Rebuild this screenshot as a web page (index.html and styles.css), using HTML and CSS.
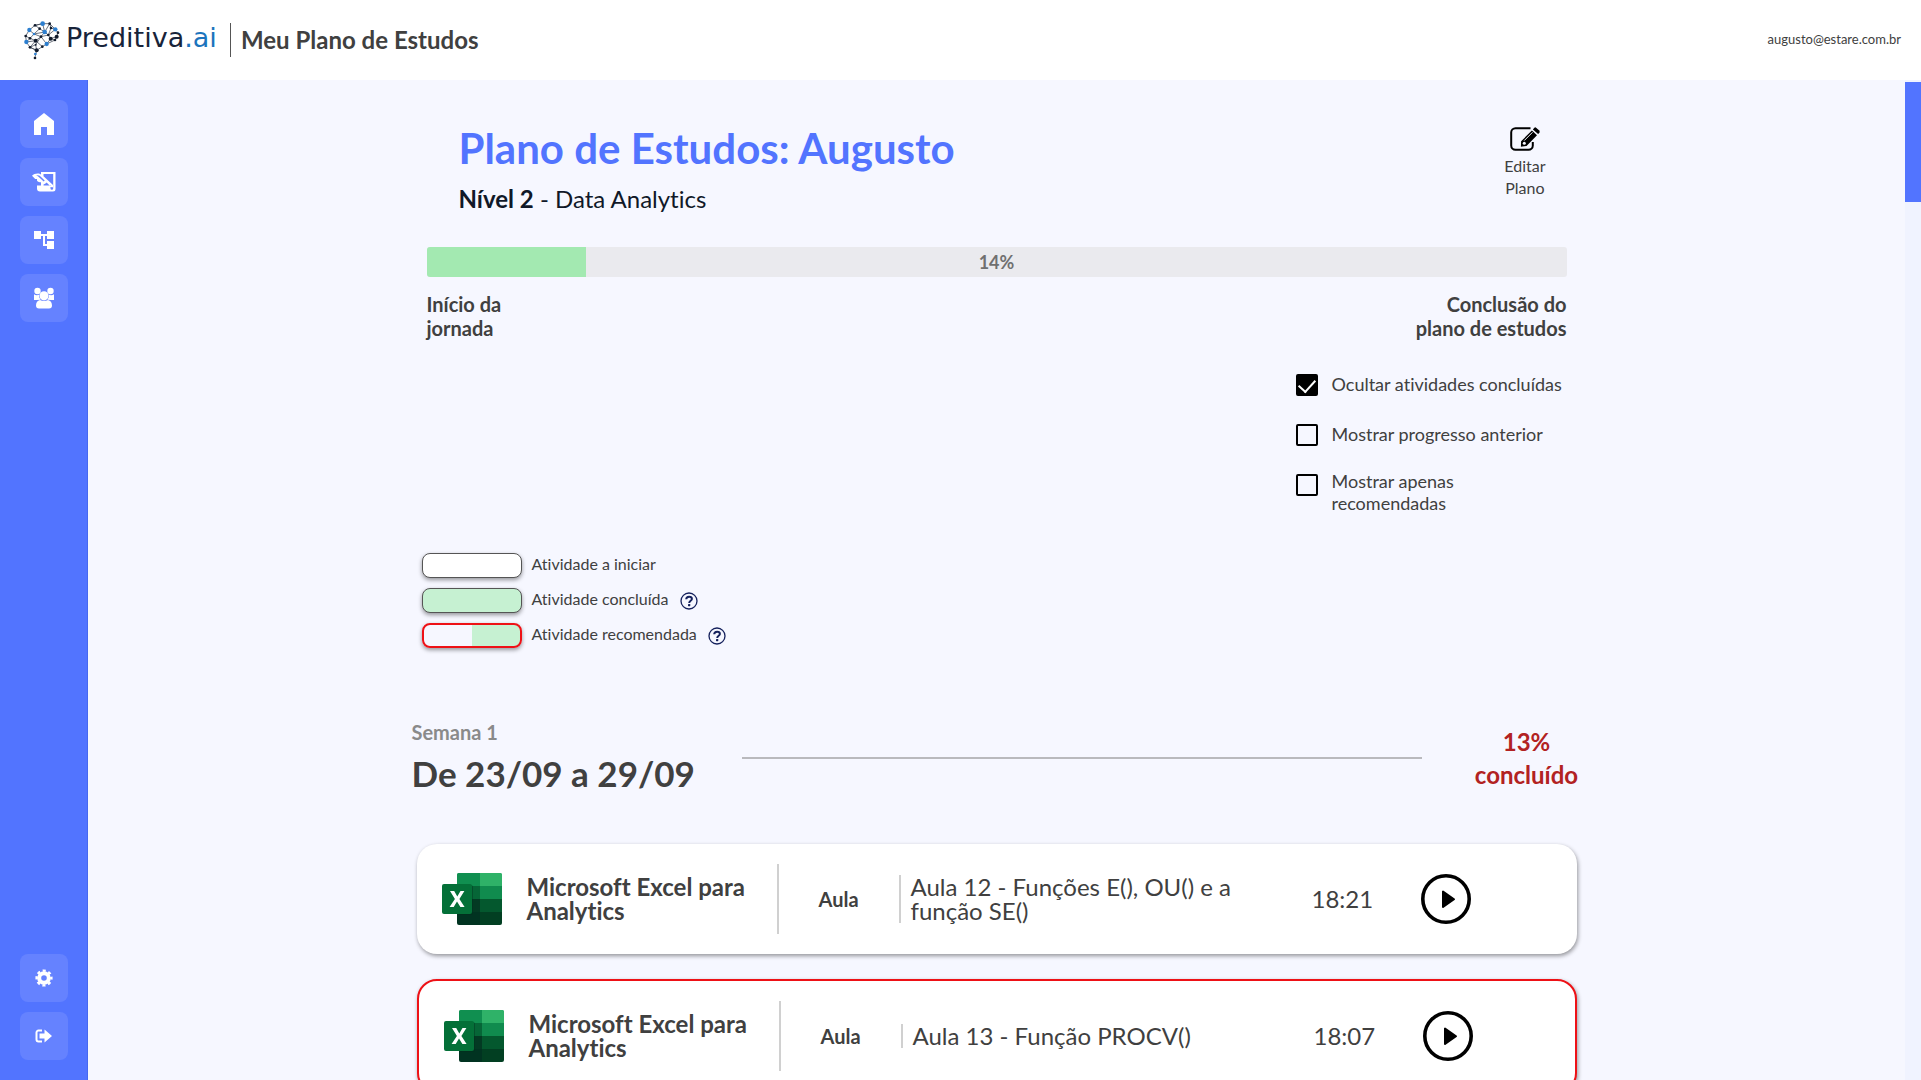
FILE: index.html
```html
<!DOCTYPE html>
<html lang="pt-BR">
<head>
<meta charset="utf-8">
<meta name="viewport" content="width=device-width, initial-scale=1">
<title>Meu Plano de Estudos - Preditiva.ai</title>
<link rel="stylesheet" href="styles.css">
</head>
<body>
<svg class="sprite" aria-hidden="true">
  <symbol id="excel" viewBox="0 0 60 53">
    <path fill="#21a366" d="M17 0h41a2 2 0 0 1 2 2v12H15V2a2 2 0 0 1 2-2z"/>
    <path fill="#108f50" d="M17 0h21v13H15V2a2 2 0 0 1 2-2z"/>
    <path fill="#2fb268" d="M38 0h20a2 2 0 0 1 2 2v11H38z"/>
    <path fill="#066637" d="M15 13h23v13H15z"/>
    <path fill="#108b4e" d="M38 13h22v13H38z"/>
    <path fill="#033a23" d="M15 26h23v13H15z"/>
    <path fill="#04582e" d="M38 26h22v13H38z"/>
    <path fill="#013321" d="M15 39h23v13H17a2 2 0 0 1-2-2z"/>
    <path fill="#023f22" d="M38 39h22v11a2 2 0 0 1-2 2H38z"/>
    <path fill="#022d1c" opacity=".4" d="M15 12h14a2 2 0 0 1 2 2v26a2 2 0 0 1-2 2H15z"/>
    <rect y="11" width="30" height="30" rx="2" fill="#047038"/>
    <path fill="#fff" d="M8 18h4.200l3.100 5.600 3.200-5.600h3.900l-5 8 5.200 8h-4.200l-3.400-5.500-3.300 5.500H7.600l5.300-8z"/>
  </symbol>
  <symbol id="play" viewBox="0 0 50 50">
    <circle cx="25" cy="25" r="23.200" fill="none" stroke="#000" stroke-width="3.600"/>
    <path fill="#000" stroke="#000" stroke-width="2" stroke-linejoin="round" d="M22 17.500v15.500l11-7.750z"/>
  </symbol>
  <symbol id="help" viewBox="0 0 18 18">
    <circle cx="9" cy="9" r="8" fill="none" stroke="#14205c" stroke-width="1.300"/>
    <path fill="none" stroke="#14205c" stroke-width="2" d="M6.200 7.300C6.300 5.500 7.500 4.700 9.100 4.700c1.700 0 2.800.8 2.800 2.200 0 1.900-2.700 1.800-2.700 4"/>
    <rect x="8" y="12" width="2.300" height="2.200" rx=".6" fill="#14205c"/>
  </symbol>
</svg>

<div class="app">
  <header class="topbar">
    <a class="brand" href="#" aria-label="Preditiva.ai">
      <svg class="brand-mark" viewBox="27 33 108 117" aria-hidden="true">
        <g fill="none" stroke="#39424f" stroke-width="2.200">
          <path d="M60 46 83 41 104 41 121 58 129 68 125 80 120 90 95 102 82 110 65 121 60 142"/>
          <path d="M60 46 43 60 32 78 34 96 45 112 65 121"/>
          <path d="M43 60 57 72 78 80 89 66 83 41 60 46 74 56 89 66 104 41 108 54 121 58 100 75 89 66 57 72 45 85 34 96 62 92 78 80 62 104 65 121 45 112 62 92 45 85 32 78M78 80 95 102 107 86 100 75 78 80M107 86 125 80M62 92 82 110M74 56 57 72M108 54 100 75M62 104 45 112M107 86 120 90"/>
        </g>
        <g fill="#111b2c">
          <circle cx="62" cy="92" r="6"/><circle cx="65" cy="121" r="6"/><circle cx="107" cy="86" r="6"/><circle cx="125" cy="80" r="6"/>
          <circle cx="60" cy="46" r="4"/><circle cx="104" cy="41" r="4"/><circle cx="78" cy="80" r="4"/><circle cx="45" cy="85" r="4"/>
          <circle cx="45" cy="112" r="4"/><circle cx="82" cy="110" r="4"/><circle cx="120" cy="90" r="4"/><circle cx="100" cy="75" r="4"/>
          <circle cx="74" cy="56" r="4"/><circle cx="108" cy="54" r="4"/><circle cx="129" cy="68" r="4"/><circle cx="32" cy="78" r="4"/><circle cx="60" cy="144" r="4"/><circle cx="62" cy="104" r="3"/>
        </g>
        <g fill="#2c7fd0">
          <circle cx="83" cy="41" r="7"/><circle cx="43" cy="60" r="6.500"/><circle cx="121" cy="58" r="6.500"/><circle cx="89" cy="66" r="7"/>
          <circle cx="34" cy="96" r="6.500"/><circle cx="95" cy="102" r="6.500"/><circle cx="61" cy="132" r="4"/><circle cx="57" cy="72" r="4"/>
        </g>
      </svg>
      <span class="brand-name">Preditiva<span class="brand-suffix">.ai</span></span>
    </a>
    <h1 class="page-name">Meu Plano de Estudos</h1>
    <span class="account">augusto@estare.com.br</span>
  </header>

  <nav class="sidebar" aria-label="Menu principal">
    <button class="nav-button" type="button" aria-label="Início">
      <svg width="24" height="24" viewBox="0 0 24 24" fill="#fff"><path d="M12 1 2 9v14h7v-8h6v8h7V9z"/></svg>
    </button>
    <button class="nav-button" type="button" aria-label="Plano de estudos">
      <svg width="24" height="24" viewBox="0 0 24 24" fill="#fff"><path fill-rule="evenodd" d="M9 2h14.500v17a2.500 2.500 0 0 1-2.500 2.500H8a3 3 0 0 1-3-3v-3h4v-3.200c-1.500 0-3-.5-4-1.500V9H3.200L0 5.700C1.800 3.900 4.500 3.100 7 3.600l2 1zm2.500 2v2.200L21 15v2.300h-1.600L14.600 12.500l-.2.300c-.8.900-1.800 1.400-2.900 1.600v1.100H18.500v3a1 1 0 0 0 2.700 0V4zM4 5.800c1 0 2 .4 2.800 1.200L11.700 11.500l1-1.100-5-4.600C6.700 5 5.200 5.100 4 5.800z"/></svg>
    </button>
    <button class="nav-button" type="button" aria-label="Trilhas">
      <svg width="24" height="24" viewBox="0 0 24 24" fill="#fff"><path d="M22 11V3h-7v3H9V3H2v8h7V8h2v10h4v3h7v-8h-7v3h-2V8h2v3z"/></svg>
    </button>
    <button class="nav-button" type="button" aria-label="Comunidade">
      <svg width="24" height="24" viewBox="0 0 24 24" fill="#fff"><circle cx="5.500" cy="5" r="3.200"/><circle cx="18.500" cy="5" r="3.200"/><path d="M2 8.300c1.500 1 3.400 1.200 5 .5a5 5 0 0 0 1.600 5L5 14H2zM22 8.300c-1.500 1-3.400 1.200-5 .5a5 5 0 0 1-1.600 5l3.600.2h3z"/><circle cx="12" cy="9.800" r="4.600"/><path d="M4 19.500c0-3 1.500-5 4-5.500 2.400 1.200 5.600 1.200 8 0 2.500.5 4 2.500 4 5.500 0 1.800-1 3-3 3H7c-2 0-3-1.200-3-3z"/></svg>
    </button>
    <button class="nav-button nav-button-bottom" type="button" aria-label="Configurações">
      <svg width="18" height="18" viewBox="0 0 18 18"><circle cx="9" cy="9" r="4.800" fill="none" stroke="#fff" stroke-width="4"/><circle cx="9" cy="9" r="7.400" fill="none" stroke="#fff" stroke-width="2.400" stroke-dasharray="3.100 2.710" stroke-dashoffset="1.550"/></svg>
    </button>
    <button class="nav-button" type="button" aria-label="Sair">
      <svg width="18" height="18" viewBox="0 0 18 18"><path fill="none" stroke="#fff" stroke-width="2" d="M7 3.500H3.500A2 2 0 0 0 1.500 5.500v7a2 2 0 0 0 2 2H7"/><path fill="#fff" d="M4.500 6.500H9.500V2.500L17 9l-7.500 6.500V11.500h-5z"/></svg>
    </button>
  </nav>

  <main class="content">
    <div class="plan">
      <section class="intro">
        <div>
          <h2 class="intro-title">Plano de Estudos: Augusto</h2>
          <p class="intro-level"><strong>Nível 2</strong> - Data Analytics</p>
        </div>
        <button class="edit-button" type="button">
          <svg width="30" height="24" viewBox="0 0 30 24" aria-hidden="true">
            <path fill="none" stroke="#000" stroke-width="2" d="M20.500 1.200H5.500A4.300 4.300 0 0 0 1.200 5.500v13a4.300 4.300 0 0 0 4.300 4.300h13a4.300 4.300 0 0 0 4.300-4.300V15"/>
            <path d="m24.300.8 1.200-.6 4.100 3.600v1.600l-1.500 1.700-5.200-4.600zM21.900 3.600l5.100 4.600L16.500 19l-5.600.800.2-5.600z"/>
            <path fill="none" stroke="#f6f7ff" stroke-width="1" d="m14.300 13.500 8.200-8.200"/>
            <circle cx="14.300" cy="16.200" r="1.500" fill="#f6f7ff"/>
          </svg>
          <span>Editar<br>Plano</span>
        </button>
      </section>

      <section class="progress" aria-label="Progresso do plano">
        <div class="progress-track">
          <div class="progress-fill" style="width: 14%"></div>
          <span class="progress-value">14%</span>
        </div>
        <div class="progress-ends">
          <span>Início da<br>jornada</span>
          <span class="progress-end">Conclusão do<br>plano de estudos</span>
        </div>
      </section>

      <form class="filters">
        <label class="filter"><input class="filter-box" type="checkbox" checked><span class="filter-text">Ocultar atividades concluídas</span></label>
        <label class="filter"><input class="filter-box" type="checkbox"><span class="filter-text">Mostrar progresso anterior</span></label>
        <label class="filter"><input class="filter-box" type="checkbox"><span class="filter-text">Mostrar apenas<br>recomendadas</span></label>
      </form>

      <ul class="legend">
        <li class="legend-row"><span class="swatch"></span><span>Atividade a iniciar</span></li>
        <li class="legend-row"><span class="swatch swatch-done"></span><span>Atividade concluída</span><svg class="help" role="img" aria-label="Ajuda"><use href="#help"/></svg></li>
        <li class="legend-row"><span class="swatch swatch-recommended"></span><span>Atividade recomendada</span><svg class="help" role="img" aria-label="Ajuda"><use href="#help"/></svg></li>
      </ul>

      <section class="week">
        <header class="week-header">
          <div>
            <p class="week-number">Semana 1</p>
            <h3 class="week-dates">De 23/09 a 29/09</h3>
          </div>
          <span class="week-rule"></span>
          <p class="week-status">13%<br>concluído</p>
        </header>
        <div class="cards">
          <article class="card">
            <svg class="card-icon" aria-hidden="true"><use href="#excel"/></svg>
            <h4 class="card-course">Microsoft Excel para Analytics</h4>
            <span class="card-kind">Aula</span>
            <p class="card-lesson">Aula 12 - Funções E(), OU() e a função SE()</p>
            <time class="card-time">18:21</time>
            <button class="card-play" type="button" aria-label="Assistir aula 12"><svg width="50" height="50"><use href="#play"/></svg></button>
          </article>
          <article class="card card-recommended">
            <svg class="card-icon" aria-hidden="true"><use href="#excel"/></svg>
            <h4 class="card-course">Microsoft Excel para Analytics</h4>
            <span class="card-kind">Aula</span>
            <p class="card-lesson">Aula 13 - Função PROCV()</p>
            <time class="card-time">18:07</time>
            <button class="card-play" type="button" aria-label="Assistir aula 13"><svg width="50" height="50"><use href="#play"/></svg></button>
          </article>
        </div>
      </section>
    </div>
  </main>

  <div class="scroll-track" aria-hidden="true"><div class="scroll-thumb"></div></div>
</div>
</body>
</html>
```

FILE: styles.css
```css
* { box-sizing: border-box; margin: 0; padding: 0; }

body {
  font-family: Lato, "Liberation Sans", sans-serif;
  font-variant-ligatures: none;
  color: #404040;
  background: #f6f7ff;
}

button { border: 0; background: none; font: inherit; color: inherit; cursor: pointer; }
.sprite { display: none; }

.app {
  display: grid;
  grid-template: 80px minmax(0, 1fr) / 88px minmax(0, 1fr) 16px;
  height: 100vh;
}

/* Top bar */
.topbar {
  grid-column: 1 / -1;
  display: flex;
  align-items: center;
  padding: 0 20px 0 24px;
  background: #fff;
}
.brand { display: flex; align-items: center; gap: 6px; height: 34px; padding-right: 13px; border-right: 1px solid #555; text-decoration: none; }
.brand-mark { width: 36px; height: 39px; }
.brand-name { width: 151px; font: 27px/32px "DejaVu Sans", sans-serif; color: #18243a; padding-bottom: 4px; }
.brand-suffix { color: #1c74bd; }
.page-name { margin-left: 10px; font-size: 24px; line-height: 30px; font-weight: 700; }
.account { margin-left: auto; padding-bottom: 2px; font-size: 13px; line-height: 16px; }

/* Sidebar */
.sidebar {
  display: flex;
  flex-direction: column;
  align-items: center;
  gap: 10px;
  padding: 20px 0;
  background: #5274ff;
  border-right: 1px solid #4668f0;
}
.nav-button {
  display: grid;
  place-items: center;
  width: 48px;
  height: 48px;
  border-radius: 8px;
  background: #6582ff;
}
.nav-button-bottom { margin-top: auto; }

/* Scroll indicator */
.scroll-track { padding-top: 2px; background: #f0f3ff; }
.scroll-thumb { height: 12%; background: #5274ff; }

/* Plan */
.content { overflow-y: auto; scrollbar-width: none; }
.plan { width: 100%; max-width: 1170px; margin: 0 auto; padding: 42px 0 40px; }

.intro { display: flex; justify-content: space-between; align-items: flex-start; padding: 0 36px 0 47px; }
.intro-title { font-size: 42px; line-height: 52px; font-weight: 700; color: #5274ff; }
.intro-level { margin-top: 10px; font-size: 24px; line-height: 30px; color: #101828; }
.edit-button { display: flex; flex-direction: column; align-items: center; gap: 4px; margin-top: 5px; font-size: 16px; line-height: 22px; }

.progress { margin: 33px 15px 0; }
.progress-track { display: grid; align-items: center; height: 30px; border-radius: 3px; background: #eaeaee; overflow: hidden; }
.progress-fill, .progress-value { grid-area: 1 / 1; }
.progress-fill { height: 30px; background: #a3e9b1; }
.progress-value { text-align: center; font-size: 18px; line-height: 24px; font-weight: 700; color: #707070; }
.progress-ends { display: flex; justify-content: space-between; margin-top: 15px; font-size: 20px; line-height: 24px; font-weight: 700; }
.progress-end { text-align: right; }

.filters { display: flex; flex-direction: column; gap: 20px; width: 286px; margin: 30px 0 0 auto; }
.filter { display: flex; align-items: flex-start; gap: 14px; min-height: 30px; }
.filter-box {
  appearance: none;
  flex: none;
  width: 22px;
  height: 22px;
  margin-top: 4px;
  border: 2px solid #000;
  border-radius: 2px;
}
.filter-box:checked { display: grid; place-items: center; background: #000; }
.filter-box:checked::before {
  content: "";
  width: 8px;
  height: 14px;
  margin-bottom: 4px;
  border: solid #fff;
  border-width: 0 2px 2px 0;
  rotate: 42deg;
}
.filter-text { min-height: 28px; display: flex; align-items: center; font-size: 18px; line-height: 22px; white-space: nowrap; }

.legend { display: flex; flex-direction: column; gap: 10px; margin: 39px 0 0 10px; list-style: none; font-size: 16px; line-height: 22px; }
.legend-row { display: flex; align-items: flex-start; height: 25px; }
.swatch { width: 100px; height: 25px; margin-right: 10px; border: 1px solid #555; border-radius: 8px; background: #fff; box-shadow: 0 2px 4px rgba(0, 0, 0, .4); }
.swatch-done { background: #c6f1d2; }
.swatch-recommended { border: 2px solid #ee1116; background: linear-gradient(90deg, #f6f7ff 50%, #c6f1d2 50%); }
.help { width: 18px; height: 18px; margin: 4px 0 0 11px; }

/* Week */
.week { margin-top: 72px; }
.week-header { display: grid; grid-template-columns: 330px minmax(0, 1fr) 160px; align-items: center; }
.week-number { font-size: 20px; line-height: 24px; font-weight: 700; color: #8a8a8a; }
.week-dates { margin-top: 7px; font-size: 35px; line-height: 44px; font-weight: 700; }
.week-rule { height: 2px; background: #b9b9bd; }
.week-status { padding-left: 50px; text-align: center; font-size: 24px; line-height: 33px; font-weight: 700; color: #b22222; }

.cards { display: flex; flex-direction: column; gap: 25px; margin: 49px 5px 0; }
.card {
  display: grid;
  grid-template-columns: 85px 252px 120px minmax(0, 1fr) 109px 50px;
  align-items: center;
  padding: 20px 106px 20px 25px;
  border-radius: 20px;
  background: #fff;
  box-shadow: 1px 2px 4px rgba(0, 0, 0, .4);
}
.card-recommended { border: 2px solid #ee1116; padding-right: 102px; }
.card-icon { width: 60px; height: 53px; }
.card-course { display: flex; align-items: center; height: 70px; padding-right: 15px; border-right: 2px solid #d0d0d0; font-size: 24px; line-height: 24px; font-weight: 700; }
.card-kind { text-align: center; font-size: 20px; line-height: 24px; font-weight: 700; }
.card-lesson { padding: 0 60px 0 10px; border-left: 2px solid #d0d0d0; font-size: 24px; line-height: 24px; }
.card-time { font-size: 24px; line-height: 24px; }
.card-play { height: 50px; }
```
